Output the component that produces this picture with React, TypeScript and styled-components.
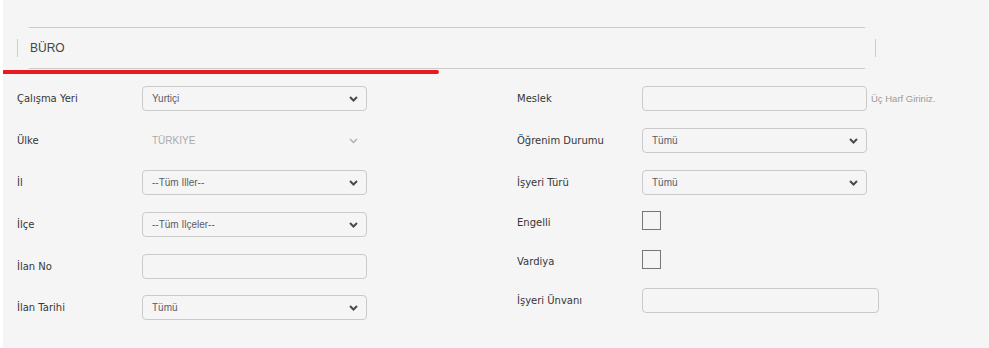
import styled, { createGlobalStyle } from 'styled-components';

const GlobalStyle = createGlobalStyle`
  html, body {
    margin: 0;
    padding: 0;
    background: #ffffff;
  }
  * {
    box-sizing: border-box;
  }
`;

const Page = styled.div`
  position: relative;
  margin-left: 3px;
  height: 348px;
  padding-top: 27px;
  background: #f5f5f5;
  overflow: hidden;
`;

const Header = styled.div`
  display: flex;
  align-items: center;
  padding-left: 14px;
`;

const SideBar = styled.div`
  width: 1px;
  height: 18px;
  background: #cccccc;
`;

const TitleBox = styled.div`
  display: flex;
  align-items: center;
  width: 836px;
  height: 42px;
  margin: 0 10px 0 11px;
  padding-left: 1px;
  border-top: 1px solid #cccccc;
  border-bottom: 1px solid #cccccc;
  font-family: "Liberation Sans", Arial, sans-serif;
  font-size: 12px;
  color: #444444;
`;

const RedMark = styled.div`
  position: absolute;
  left: -1px;
  top: 70px;
  width: 437px;
  height: 4px;
  border-radius: 2px;
  background: #e8191f;
`;

const Form = styled.div`
  display: grid;
  grid-template-columns: 500px 500px;
  margin-top: 8px;
  padding-left: 14px;
`;

const Column = styled.div`
  display: flex;
  flex-direction: column;
`;

const Row = styled.div<{ $h: number }>`
  display: flex;
  align-items: center;
  height: ${(p) => p.$h}px;
`;

const Label = styled.label`
  width: 125px;
  flex-shrink: 0;
  font-family: "DejaVu Sans", Verdana, sans-serif;
  font-size: 10px;
  color: #363636;
`;

const SelectWrap = styled.div<{ $w: number }>`
  position: relative;
  width: ${(p) => p.$w}px;
  height: 25px;
`;

const Select = styled.select<{ $plain?: boolean }>`
  appearance: none;
  width: 100%;
  height: 100%;
  padding: 0 24px 0 9px;
  border: 1px solid ${(p) => (p.$plain ? 'transparent' : '#cacaca')};
  border-radius: 4px;
  background: transparent;
  font-family: "Liberation Sans", Arial, sans-serif;
  font-size: 10px;
  color: ${(p) => (p.$plain ? '#aaaaaa' : '#5c5c66')};
  outline: none;
  opacity: 1;
`;

const Chevron = styled.svg<{ $muted?: boolean }>`
  position: absolute;
  right: 9px;
  top: 10px;
  width: 9px;
  height: 6px;
  pointer-events: none;
  color: ${(p) => (p.$muted ? '#b0b0b0' : '#4a4a4a')};
`;

const TextInput = styled.input<{ $w: number }>`
  width: ${(p) => p.$w}px;
  height: 25px;
  padding: 0 9px;
  border: 1px solid #cacaca;
  border-radius: 4px;
  background: transparent;
  font-family: "Liberation Sans", Arial, sans-serif;
  font-size: 10px;
  outline: none;
`;

const Hint = styled.span`
  margin-left: 4px;
  font-family: "Liberation Sans", Arial, sans-serif;
  font-size: 9.5px;
  color: #9a9a9a;
`;

const Check = styled.input`
  appearance: none;
  width: 19px;
  height: 19px;
  margin: -4px 0 0 0;
  border: 1px solid #777777;
  background: transparent;
`;

type DropProps = {
  value: string;
  width?: number;
  plain?: boolean;
};

function Drop({ value, width = 225, plain }: DropProps) {
  return (
    <SelectWrap $w={width}>
      <Select $plain={plain} disabled={plain} defaultValue={value}>
        <option>{value}</option>
      </Select>
      <Chevron $muted={plain} viewBox="0 0 9 6">
        <path d="M1 1 L4.5 4.5 L8 1" fill="none" stroke="currentColor" strokeWidth={plain ? 1.5 : 2} />
      </Chevron>
    </SelectWrap>
  );
}

function App() {
  return (
    <>
      <GlobalStyle />
      <Page>
        <Header>
          <SideBar />
          <TitleBox>BÜRO</TitleBox>
          <SideBar />
        </Header>
        <RedMark />

        <Form>
          <Column>
            <Row $h={42}>
              <Label>Çalışma Yeri</Label>
              <Drop value="Yurtiçi" />
            </Row>
            <Row $h={42}>
              <Label>Ülke</Label>
              <Drop value="TÜRKİYE" plain />
            </Row>
            <Row $h={42}>
              <Label>İl</Label>
              <Drop value="--Tüm İller--" />
            </Row>
            <Row $h={42}>
              <Label>İlçe</Label>
              <Drop value="--Tüm İlçeler--" />
            </Row>
            <Row $h={42}>
              <Label>İlan No</Label>
              <TextInput $w={225} />
            </Row>
            <Row $h={41}>
              <Label>İlan Tarihi</Label>
              <Drop value="Tümü" />
            </Row>
          </Column>

          <Column>
            <Row $h={42}>
              <Label>Meslek</Label>
              <TextInput $w={225} />
              <Hint>Üç Harf Giriniz.</Hint>
            </Row>
            <Row $h={42}>
              <Label>Öğrenim Durumu</Label>
              <Drop value="Tümü" />
            </Row>
            <Row $h={42}>
              <Label>İşyeri Türü</Label>
              <Drop value="Tümü" />
            </Row>
            <Row $h={39}>
              <Label>Engelli</Label>
              <Check type="checkbox" />
            </Row>
            <Row $h={39}>
              <Label>Vardiya</Label>
              <Check type="checkbox" />
            </Row>
            <Row $h={39}>
              <Label>İşyeri Ünvanı</Label>
              <TextInput $w={237} />
            </Row>
          </Column>
        </Form>
      </Page>
    </>
  );
}

export default App;
